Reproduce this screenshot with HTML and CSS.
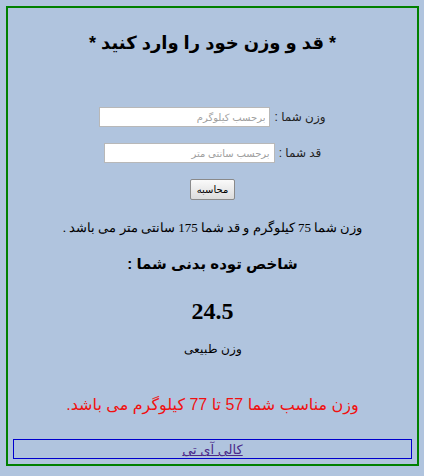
FILE: index.html
```html
<!DOCTYPE html>
<html lang="fa" dir="rtl">
<head>
<meta charset="utf-8">
<title>BMI</title>
<link rel="stylesheet" href="styles.css">
</head>
<body>
<div class="frame">
  <h1 class="title">* قد و وزن خود را وارد کنید *</h1>
  <form class="form">
    <div class="row"><label class="label">وزن شما :</label><input class="field" type="text" placeholder="برحسب کیلوگرم"></div>
    <div class="row"><label class="label">قد شما :</label><input class="field" type="text" placeholder="برحسب سانتی متر"></div>
    <div class="row"><button class="btn" type="button">محاسبه</button></div>
  </form>
  <p class="summary">وزن شما 75 کیلوگرم و قد شما 175 سانتی متر می باشد .</p>
  <h2 class="subtitle">شاخص توده بدنی شما :</h2>
  <div class="bmi">24.5</div>
  <p class="status">وزن طبیعی</p>
  <p class="ideal">وزن مناسب شما 57 تا 77 کیلوگرم می باشد.</p>
  <div class="footer"><a class="link" href="#">کالی آی تی</a></div>
</div>
</body>
</html>
```
FILE: styles.css
```css
html, body {
  margin: 0;
  padding: 0;
  background: #b0c4de;
}
body {
  padding: 6px 5px 0 6px;
  font-family: "Liberation Sans", "DejaVu Sans", sans-serif;
  color: #000;
}
.frame {
  border: 2px solid #008000;
  padding: 0 5px 5px 5px;
  height: 460px;
  box-sizing: border-box;
  display: flex;
  flex-direction: column;
  align-items: center;
  text-align: center;
}
.title {
  font-size: 18px;
  font-weight: bold;
  margin: 23px 0 0 0;
  line-height: 24px;
}
.form {
  margin-top: 52px;
  display: flex;
  flex-direction: column;
  align-items: center;
  gap: 16px;
}
.row {
  display: flex;
  align-items: center;
  gap: 4px;
}
.label {
  font-size: 12px;
  color: #222;
}
.field {
  width: 171px;
  height: 20px;
  box-sizing: border-box;
  border: 1px solid #b8b8b8;
  background: #fff;
  padding: 0 4px;
  font-family: inherit;
  font-size: 10px;
}
.field::placeholder {
  color: #a0a0a0;
}
.btn {
  width: 45px;
  height: 21px;
  font-family: inherit;
  font-size: 10px;
  border: 1px solid #8a8a8a;
  border-radius: 2px;
  background: linear-gradient(#fafafa, #dcdcdc);
  padding: 0;
}
.summary {
  font-family: "Liberation Serif", "DejaVu Serif", serif;
  font-size: 13px;
  margin: 20px 0 0 0;
}
.subtitle {
  font-size: 15px;
  font-weight: bold;
  margin: 19px 0 0 0;
}
.bmi {
  font-family: "Liberation Serif", "DejaVu Serif", serif;
  font-size: 24px;
  font-weight: bold;
  margin-top: 25px;
}
.status {
  font-family: "Liberation Serif", "DejaVu Serif", serif;
  font-size: 12px;
  margin: 17px 0 0 0;
}
.ideal {
  color: #f01010;
  font-size: 16px;
  margin: 38px 0 0 0;
}
.footer {
  align-self: stretch;
  margin-top: auto;
  border: 1px solid #0000cd;
  height: 20px;
  box-sizing: border-box;
  line-height: 18px;
}
.link {
  color: #4b2a8a;
  font-size: 13px;
}
```
